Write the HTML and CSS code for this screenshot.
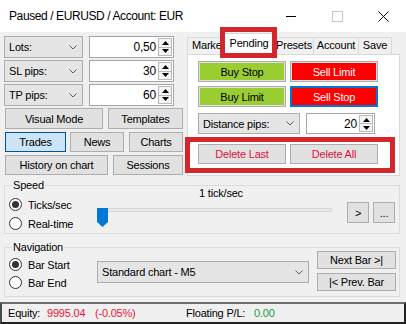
FILE: index.html
```html
<!DOCTYPE html>
<html lang="en">
<head>
  <meta charset="UTF-8" />
  <meta name="viewport" content="width=device-width, initial-scale=1.0" />
  <title>Paused / EURUSD / Account: EUR</title>
  <link rel="stylesheet" href="styles.css">
</head>
<body>
  <div class="window">
    <div class="titlebar">
      <div class="title">Paused / EURUSD / Account: EUR</div>
      <div class="ctrl"><svg width="10" height="10"><line x1="0" y1="5.5" x2="10" y2="5.5" stroke="#000"/></svg></div>
      <div class="ctrl"><svg width="11" height="11"><rect x="0.5" y="0.5" width="10" height="10" fill="none" stroke="#c6c6c6"/></svg></div>
      <div class="ctrl"><svg width="11" height="11"><path d="M0.5 0.5 L10.5 10.5 M10.5 0.5 L0.5 10.5" stroke="#000"/></svg></div>
    </div>

    <div class="top">
      <div class="left">
        <div class="field">
          <div class="combo combo-lots">Lots:<svg width="8" height="5"><path d="M0.5 0.5 L4 4 L7.5 0.5" fill="none" stroke="#606060"/></svg></div>
          <div class="spin spin-lots">
            <span class="spin-val">0,50</span>
            <span class="spin-btns">
              <span><svg width="7" height="4"><path d="M0 4 L3.5 0 L7 4Z"/></svg></span>
              <span><svg width="7" height="4"><path d="M0 0 L3.5 4 L7 0Z"/></svg></span>
            </span>
          </div>
        </div>
        <div class="field">
          <div class="combo combo-lots">SL pips:<svg width="8" height="5"><path d="M0.5 0.5 L4 4 L7.5 0.5" fill="none" stroke="#606060"/></svg></div>
          <div class="spin spin-lots">
            <span class="spin-val">30</span>
            <span class="spin-btns">
              <span><svg width="7" height="4"><path d="M0 4 L3.5 0 L7 4Z"/></svg></span>
              <span><svg width="7" height="4"><path d="M0 0 L3.5 4 L7 0Z"/></svg></span>
            </span>
          </div>
        </div>
        <div class="field">
          <div class="combo combo-lots">TP pips:<svg width="8" height="5"><path d="M0.5 0.5 L4 4 L7.5 0.5" fill="none" stroke="#606060"/></svg></div>
          <div class="spin spin-lots">
            <span class="spin-val">60</span>
            <span class="spin-btns">
              <span><svg width="7" height="4"><path d="M0 4 L3.5 0 L7 4Z"/></svg></span>
              <span><svg width="7" height="4"><path d="M0 0 L3.5 4 L7 0Z"/></svg></span>
            </span>
          </div>
        </div>

        <div class="btn-row r1">
          <button class="btn w-visual">Visual Mode</button>
          <button class="btn w-templates">Templates</button>
        </div>
        <div class="btn-row r2">
          <button class="btn w-trades active">Trades</button>
          <button class="btn w-news">News</button>
          <button class="btn w-charts">Charts</button>
        </div>
        <div class="btn-row r3">
          <button class="btn w-history">History on chart</button>
          <button class="btn w-sessions">Sessions</button>
        </div>
      </div>

      <div class="tabs">
        <div class="tabstrip">
          <div class="tab t-market">Market</div>
          <div class="tab t-pending selected">Pending</div>
          <div class="tab t-presets">Presets</div>
          <div class="tab t-account">Account</div>
          <div class="tab t-save">Save</div>
        </div>
        <div class="panel">
          <div class="p-row">
            <button class="btn p-btn green">Buy Stop</button>
            <button class="btn p-btn red">Sell Limit</button>
          </div>
          <div class="p-row">
            <button class="btn p-btn green">Buy Limit</button>
            <button class="btn p-btn red focus">Sell Stop</button>
          </div>
          <div class="p-row p-dist">
            <div class="combo combo-dist">Distance pips:<svg width="8" height="5"><path d="M0.5 0.5 L4 4 L7.5 0.5" fill="none" stroke="#606060"/></svg></div>
            <div class="spin spin-dist">
              <span class="spin-val">20</span>
              <span class="spin-btns">
                <span><svg width="7" height="4"><path d="M0 4 L3.5 0 L7 4Z"/></svg></span>
                <span><svg width="7" height="4"><path d="M0 0 L3.5 4 L7 0Z"/></svg></span>
              </span>
            </div>
          </div>
          <div class="mark-delete">
            <button class="btn del">Delete Last</button>
            <button class="btn del">Delete All</button>
          </div>
        </div>
        <div class="mark-pending"></div>
      </div>
    </div>

    <div class="group speed">
      <span class="group-title">Speed</span>
      <div class="radios">
        <div class="radio-row"><span class="radio on"></span>Ticks/sec</div>
        <div class="radio-row"><span class="radio"></span>Real-time</div>
      </div>
      <div class="speed-mid">
        <div class="speed-label">1 tick/sec</div>
        <div class="slider">
          <div class="track"></div>
          <svg class="thumb" width="11" height="19"><path d="M0 0 H11 V14 L5.5 19 L0 14Z" fill="#0078d7"/></svg>
        </div>
      </div>
      <div class="speed-btns">
        <button class="btn sq">&gt;</button>
        <button class="btn sq">...</button>
      </div>
    </div>

    <div class="group nav">
      <span class="group-title">Navigation</span>
      <div class="radios">
        <div class="radio-row"><span class="radio on"></span>Bar Start</div>
        <div class="radio-row"><span class="radio"></span>Bar End</div>
      </div>
      <div class="combo combo-chart">Standard chart - M5<svg width="8" height="5"><path d="M0.5 0.5 L4 4 L7.5 0.5" fill="none" stroke="#606060"/></svg></div>
      <div class="nav-btns">
        <button class="btn">Next Bar &gt;|</button>
        <button class="btn">|&lt; Prev. Bar</button>
      </div>
    </div>

    <div class="status">
      <span class="st-equity">Equity:</span>
      <span class="st-value neg">9995.04</span>
      <span class="st-pct neg">(-0.05%)</span>
      <span class="st-float">Floating P/L:</span>
      <span class="pos">0.00</span>
    </div>
  </div>
</body>
</html>
```

FILE: styles.css
```css
* {
  box-sizing: border-box;
}
body {
  margin: 0;
  background: #f0f0f0;
  font-family: 'Liberation Sans', Arial, sans-serif;
  font-size: 11px;
  letter-spacing: -0.2px;
  color: #000;
}
.window {
  width: 406px;
  height: 324px;
  background: #f0f0f0;
  overflow: hidden;
}
.titlebar {
  height: 32px;
  background: #fff;
  display: flex;
  align-items: center;
}
.title {
  flex: 1;
  padding-left: 9px;
  font-size: 12px;
  letter-spacing: -0.4px;
}
.ctrl {
  width: 46px;
  height: 32px;
  display: flex;
  align-items: center;
  justify-content: center;
}

/* top area */
.top {
  display: flex;
  padding: 1px 0 0 4px;
}
.left {
  width: 180px;
  margin-top: 3px;
}
.field {
  display: flex;
  gap: 6px;
  height: 22px;
  margin-bottom: 2px;
}
.combo {
  display: flex;
  align-items: center;
  justify-content: space-between;
  padding: 0 5px 0 4px;
  background: #e5e5e5;
  border: 1px solid #adadad;
}
.combo-lots {
  width: 79px;
}
.spin {
  display: flex;
  background: #fff;
  border: 1px solid #a5a5a5;
}
.spin-lots {
  width: 85px;
}
.spin-val {
  flex: 1;
  text-align: right;
  padding-right: 2px;
  font-size: 12px;
  line-height: 20px;
}
.spin-btns {
  width: 14px;
  display: flex;
  flex-direction: column;
  margin: 1px 1px 1px 0;
}
.spin-btns span {
  flex: 1;
  display: flex;
  align-items: center;
  justify-content: center;
  border: 1px solid #b9b9b9;
  background: #f4f4f4;
}
.spin-btns span + span {
  border-top: none;
}

.btn {
  font: inherit;
  letter-spacing: inherit;
  color: #000;
  background: #e1e1e1;
  border: 1px solid #adadad;
  padding: 0;
  display: flex;
  align-items: center;
  justify-content: center;
  white-space: nowrap;
}
.btn.active {
  background: #cce4f7;
  border-color: #005499;
}
.btn-row {
  display: flex;
  padding-left: 1px;
}
.r1 { height: 21px; }
.r2 { height: 20px; margin-top: 3px; }
.r3 { height: 20px; margin-top: 3px; }
.w-visual { width: 98px; }
.w-templates { width: 75px; margin-left: 5px; }
.w-trades { width: 61px; }
.w-news { width: 54px; margin-left: 4px; }
.w-charts { width: 54px; margin-left: 5px; }
.w-history { width: 103px; }
.w-sessions { width: 70px; margin-left: 5px; }

/* tabs */
.tabs {
  position: relative;
  width: 213px;
  margin-left: 3px;
}
.tabstrip {
  display: flex;
  align-items: flex-end;
  height: 21px;
}
.tab {
  height: 17px;
  border-top: 1px solid #d9d9d9;
  border-left: 1px solid #d9d9d9;
  background: #f0f0f0;
  text-align: center;
  line-height: 15px;
  white-space: nowrap;
  overflow: hidden;
}
.t-market { width: 36px; text-align: left; padding-left: 4px; }
.t-pending { width: 52px; }
.t-presets { width: 38px; border-left: none; }
.t-account { width: 45px; }
.t-save { width: 34px; border-right: 1px solid #d9d9d9; }
.tab.selected {
  position: relative;
  z-index: 1;
  height: 22px;
  margin-bottom: -1px;
  padding-top: 2px;
  background: #fff;
  border: 1px solid #d9d9d9;
  border-bottom: none;
}
.panel {
  height: 122px;
  padding: 6px 0 0 10px;
  background: #fff;
  border: 1px solid #d9d9d9;
}
.p-row {
  display: flex;
  gap: 4px;
  height: 21px;
}
.p-row + .p-row {
  margin-top: 4px;
}
.p-btn {
  width: 88px;
}
.green {
  background: #9acd32;
  box-shadow: inset 0 0 0 1px #e1e1e1;
}
.red {
  background: #ff0000;
  color: #fff;
  box-shadow: inset 0 0 0 1px #e1e1e1;
}
.red.focus {
  border-color: #0078d7;
  box-shadow: inset 0 0 0 1px #0078d7;
}
.p-row.p-dist {
  margin-top: 6px;
  gap: 6px;
}
.combo-dist { width: 102px; }
.spin-dist { width: 69px; }
.mark-delete {
  display: flex;
  gap: 4px;
  width: 210px;
  height: 36px;
  margin: 3px 0 0 -13px;
  padding: 2px 0 0 8px;
  border: 5px solid #d4272d;
}
.del {
  width: 88px;
  height: 20px;
  color: #dc143c;
}
.mark-pending {
  position: absolute;
  left: 33px;
  top: -6px;
  width: 57px;
  height: 31px;
  border: 5px solid #d4272d;
  z-index: 2;
}

/* group boxes */
.group {
  position: relative;
  display: flex;
  margin: 9px 6px 0 4px;
  border: 1px solid #dcdcdc;
}
.group-title {
  position: absolute;
  left: 7px;
  top: -7px;
  padding: 0 1px;
  line-height: 13px;
  background: #f0f0f0;
}
.speed { height: 49px; }
.nav { height: 50px; margin-top: 13px; }
.radios {
  width: 92px;
  padding: 12px 0 0 4px;
  display: flex;
  flex-direction: column;
  gap: 6px;
}
.nav .radios {
  padding-top: 10px;
  gap: 5px;
}
.radio-row {
  display: flex;
  align-items: center;
  gap: 6px;
  height: 13px;
}
.radio {
  width: 13px;
  height: 13px;
  border: 1px solid #333;
  border-radius: 50%;
  background: #fff;
  display: flex;
  align-items: center;
  justify-content: center;
}
.radio.on::after {
  content: "";
  width: 7px;
  height: 7px;
  border-radius: 50%;
  background: #333;
}
.speed-mid {
  width: 248px;
  padding-top: 1px;
}
.speed-label {
  text-align: center;
  line-height: 13px;
}
.slider {
  position: relative;
  height: 19px;
  margin-top: 8px;
}
.track {
  width: 233px;
  height: 4px;
  margin: 6px 0 0 2px;
  background: #e7eaea;
  border: 1px solid #d6d6d6;
}
.thumb {
  position: absolute;
  left: 0;
  top: 0;
}
.speed-btns {
  display: flex;
  gap: 4px;
  margin-left: 2px;
  padding-top: 16px;
}
.sq {
  width: 22px;
  height: 21px;
}
.combo-chart {
  width: 212px;
  height: 22px;
  margin-top: 13px;
}
.nav-btns {
  width: 79px;
  margin-left: 8px;
  padding-top: 3px;
  display: flex;
  flex-direction: column;
  gap: 4px;
}
.nav-btns .btn {
  height: 18px;
}

/* status bar */
.status {
  display: flex;
  align-items: center;
  height: 22px;
  margin-top: 5px;
  padding-left: 6px;
  border-top: 2px solid #6e6e6e;
  border-left: 2px solid #4a4a4a;
  border-right: 2px solid #222;
  border-bottom: 2px solid #222;
}
.st-equity { width: 39px; }
.st-value { width: 48px; }
.st-pct { width: 91px; }
.st-float { width: 68px; }
.neg { color: #ec1535; }
.pos { color: #169c3c; }
```
